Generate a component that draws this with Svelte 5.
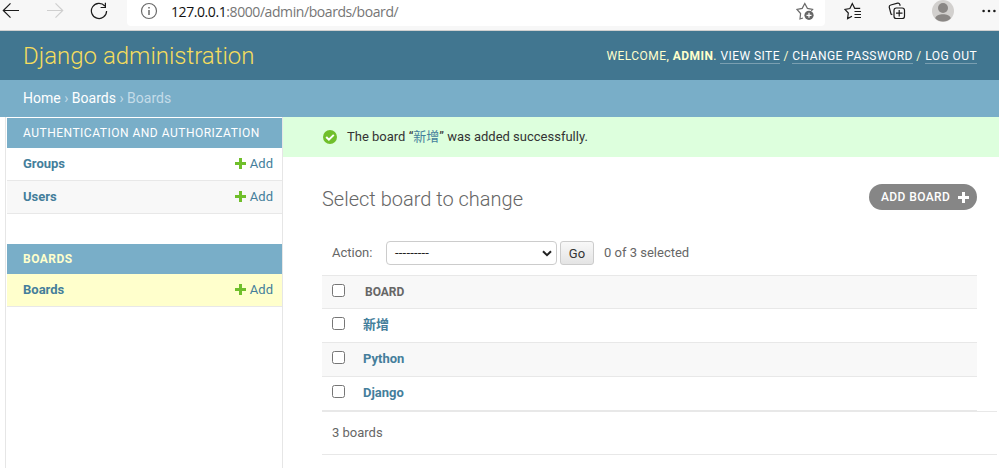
<script>
  const apps = [
    { name: 'Authentication and Authorization', models: ['Groups', 'Users'], current: false },
    { name: 'Boards', models: ['Boards'], current: true }
  ];
  const boards = ['新增', 'Python', 'Django'];
</script>

{#snippet plus()}
  <svg class="plus" width="11" height="11" viewBox="0 0 11 11"><path d="M4 0h3v4h4v3H7v4H4V7H0V4h4z" fill="currentColor" /></svg>
{/snippet}

<div class="window">
  <div class="toolbar">
    <div class="nav">
      <svg width="18" height="18" viewBox="0 0 18 18"><path d="M17 8.5H1.5M8.5 1.3 1.3 8.5l7.2 7.2" /></svg>
      <svg class="off" width="18" height="18" viewBox="0 0 18 18"><path d="M1 8.5h15.5M9.5 1.3l7.2 7.2-7.2 7.2" /></svg>
      <svg width="18" height="18" viewBox="0 0 18 18"><path d="M14.8 4A7.6 7.6 0 1 0 16.6 9M15.4.8v4.7h-4.8" /></svg>
    </div>
    <div class="address">
      <svg class="info" width="18" height="18" viewBox="0 0 18 18"><circle cx="9" cy="9" r="7.5" /><path d="M9 8v5M9 5v1.5" stroke-width="1.5" /></svg>
      <span class="url"><b>127.0.0.1</b>:8000/admin/boards/board/</span>
      <svg class="fav" width="18" height="18" viewBox="0 0 18 18"><path d="M7 16 4 17l.6-5.5L1 7.4l5.2-1L8.8 1.5l2.6 4.9 5.2 1-1.3 1.5" /><circle cx="13" cy="13.3" r="4.6" fill="#666" stroke="none" /><path d="M13 10.8v5M10.5 13.3h5" stroke="#fff" /></svg>
    </div>
    <div class="tools">
      <svg width="18" height="18" viewBox="0 0 18 18"><path d="M8 14.2 3.6 16.6 4.3 11 .9 7.4l5-.9L8.3 1.6l2.4 4.7h5.5M10.5 9.5H17M10.5 12.5H17M10.5 15.5H17" /></svg>
      <svg width="18" height="18" viewBox="0 0 18 18"><rect x="6" y="6" width="10.5" height="10.5" rx="2.3" /><path d="M11.2 8v6.5M8 11.2h6.5M4.3 12.6 3 12 1.2 5.2Q1 3.5 2.8 3L9.6 1.2q1.7-.3 2.2 1.2l.4 1.3" /></svg>
      <svg class="avatar" width="22" height="22" viewBox="0 0 22 22"><circle cx="11" cy="11" r="11" fill="#d2d0ce" /><circle cx="11" cy="8" r="5" fill="#8a8785" /><path d="M3.2 18.2c1.2-5.4 14.4-5.4 15.6 0a11 11 0 0 1-15.6 0z" fill="#8a8785" /></svg>
      <svg class="more" width="14" height="4" viewBox="0 0 14 4"><circle cx="1.6" cy="2" r="1.3" /><circle cx="7" cy="2" r="1.3" /><circle cx="12.4" cy="2" r="1.3" /></svg>
    </div>
  </div>

  <header>
    <div class="brand">Django administration</div>
    <div class="user">Welcome, <strong>admin</strong>. <a href="#site">View site</a> / <a href="#password">Change password</a> / <a href="#logout">Log out</a></div>
  </header>
  <div class="crumbs"><a href="#home">Home</a> › <a href="#boards">Boards</a> › Boards</div>

  <div class="main">
    <nav class="sidebar">
      {#each apps as app}
        <section class:current={app.current}>
          <div class="caption">{app.name}</div>
          {#each app.models as model}
            <div class="model"><b>{model}</b><span class="add">{@render plus()}Add</span></div>
          {/each}
        </section>
      {/each}
    </nav>
    <div class="content">
      <div class="message">
        <svg width="14" height="14" viewBox="0 0 14 14"><circle cx="7" cy="7" r="7" fill="#70bf2b" /><path d="m3.2 7 2.7 2.7 4.9-4.8" fill="none" stroke="#fff" stroke-width="2" /></svg>
        <span>The board “<a href="#new">新增</a>” was added successfully.</span>
      </div>
      <div class="heading">
        <h1>Select board to change</h1>
        <button class="addboard">Add board {@render plus()}</button>
      </div>
      <div class="actions">
        <span class="label">Action:</span>
        <div class="select"><span>---------</span><svg width="10" height="7" viewBox="0 0 10 7"><path d="m1 1.2 4 4 4-4" fill="none" stroke="#222" stroke-width="2" /></svg></div>
        <button class="go">Go</button>
        <span class="count">0 of 3 selected</span>
      </div>
      <div class="table">
        <div class="row head"><i class="box"></i><span>Board</span></div>
        {#each boards as board}
          <div class="row"><i class="box"></i><b>{board}</b></div>
        {/each}
      </div>
      <div class="paginator">3 boards</div>
    </div>
  </div>
</div>

<style>
  :global(body) { margin: 0; background: #fff; }
  .window { width: 999px; height: 468px; overflow: hidden; display: flex; flex-direction: column; font: 13px/16px Roboto, "Noto Sans CJK TC", sans-serif; color: #666; }
  .window * { box-sizing: border-box; }
  svg { display: block; flex: none; }
  a { color: inherit; text-decoration: none; }
  button { font-family: inherit; }

  .toolbar { height: 31px; flex: none; display: flex; background: #f7f7f7; border-bottom: 1px solid #d0d0d0; }
  .nav { display: flex; width: 127px; padding: 2px 0 0 2px; gap: 26px; }
  .nav svg, .tools svg, .address svg { fill: none; stroke: #1b1b1b; stroke-width: 1.2; }
  .nav svg.off { stroke: #cfcfcf; }
  .address { width: 698px; height: 26px; display: flex; align-items: flex-start; background: #fff; border-radius: 0 0 4px 4px; padding: 2px 11px 0 13px; }
  .address svg { stroke: #6b6b6b; }
  .url { flex: 1; margin: 0 0 0 13px; font: 14px/19px "Open Sans", "Noto Sans", sans-serif; letter-spacing: -.42px; color: #767676; white-space: nowrap; }
  .url b { font-weight: 400; color: #111; }
  .tools { display: flex; padding: 2px 0 0 19px; }
  .tools svg + svg { margin-left: 26px; }
  .tools svg.avatar { margin-top: -2px; stroke: none; }
  .tools svg.more { margin: 7px 0 0 28px; fill: #1b1b1b; stroke: none; }

  header { height: 49px; flex: none; display: flex; justify-content: space-between; align-items: center; padding: 0 22px 0 23px; background: #417690; color: #ffc; }
  .brand { font-size: 24px; line-height: 28px; font-weight: 300; color: #f5dd5d; }
  .user { font-size: 12px; line-height: 14px; letter-spacing: .45px; text-transform: uppercase; }
  .user a { color: #fff; border-bottom: 1px solid #7a9fb1; }
  .crumbs { height: 37px; flex: none; padding: 10px 23px; background: #79aec8; color: #c4dce8; font-size: 14px; }
  .crumbs a { color: #fff; }

  .main { flex: 1; display: flex; min-height: 0; }
  .sidebar { width: 278px; margin-left: 5px; padding: 1px 0 0 1px; border: solid #e6e6e6; border-width: 0 1px; }
  section { margin-bottom: 30px; }
  .caption { height: 30px; padding: 7px 16px; background: #79aec8; color: #fff; font-size: 12px; letter-spacing: .5px; text-transform: uppercase; }
  .model { height: 33px; display: flex; justify-content: space-between; padding: 8px 9px 0 16px; border-bottom: 1px solid #e8e8e8; color: #447e9b; }
  .model b { font-weight: 700; }
  .model:nth-child(odd) { background: #f8f8f8; }
  .add { display: flex; gap: 4px; }
  .add .plus, .add :global(svg) { margin-top: 2px; color: #70bf2b; }
  .current .caption { color: #ffc; font-weight: 700; }
  .current .model { background: #ffc; }

  .content { flex: 1; }
  .message { height: 40px; display: flex; align-items: center; gap: 10px; padding-left: 40px; background: #dfd; color: #333; }
  .message a { color: #447e9b; }
  .heading { height: 84px; display: flex; justify-content: space-between; align-items: flex-start; padding: 27px 22px 0 39px; }
  h1 { margin: 3px 0 0; font-size: 20px; line-height: 24px; font-weight: 300; color: #666; }
  .addboard { width: 108px; height: 26px; display: flex; align-items: center; justify-content: space-between; padding: 0 8px 0 12px; border: 0; border-radius: 13px; background: #868686; color: #fff; font-size: 12px; font-weight: 500; letter-spacing: .4px; text-transform: uppercase; }
  .actions { height: 34px; display: flex; align-items: flex-start; padding-left: 49px; }
  .label { width: 54px; padding-top: 4px; }
  .select { width: 171px; height: 24px; display: flex; align-items: center; justify-content: space-between; padding: 0 4px 0 8px; border: 1px solid #ccc; border-radius: 4px; color: #222; }
  .select span { letter-spacing: .2px; }
  .go { width: 34px; height: 24px; margin-left: 3px; padding: 1px 0 0; border: 1px solid #ccc; border-radius: 3px; background: linear-gradient(#f8f8f8, #e4e4e4); color: #333; font-size: 13px; }
  .count { padding: 4px 0 0 10px; }
  .table { margin: 0 22px 0 39px; border-top: 1px solid #e8e8e8; }
  .row { height: 34px; display: flex; padding: 8px 10px; border-bottom: 1px solid #e8e8e8; }
  .row:nth-child(odd) { background: #f8f8f8; }
  .head { height: 33px; }
  .head span { margin-left: 20px; font-size: 12px; font-weight: 700; text-transform: uppercase; }
  .row b { margin-left: 18px; color: #447e9b; }
  .box { width: 13px; height: 13px; border: 1px solid #767676; border-radius: 2.5px; background: #fff; }
  .paginator { height: 44px; margin: 0 2px 0 39px; padding: 13px 10px; border: solid #e8e8e8; border-width: 1px 0; }
</style>
